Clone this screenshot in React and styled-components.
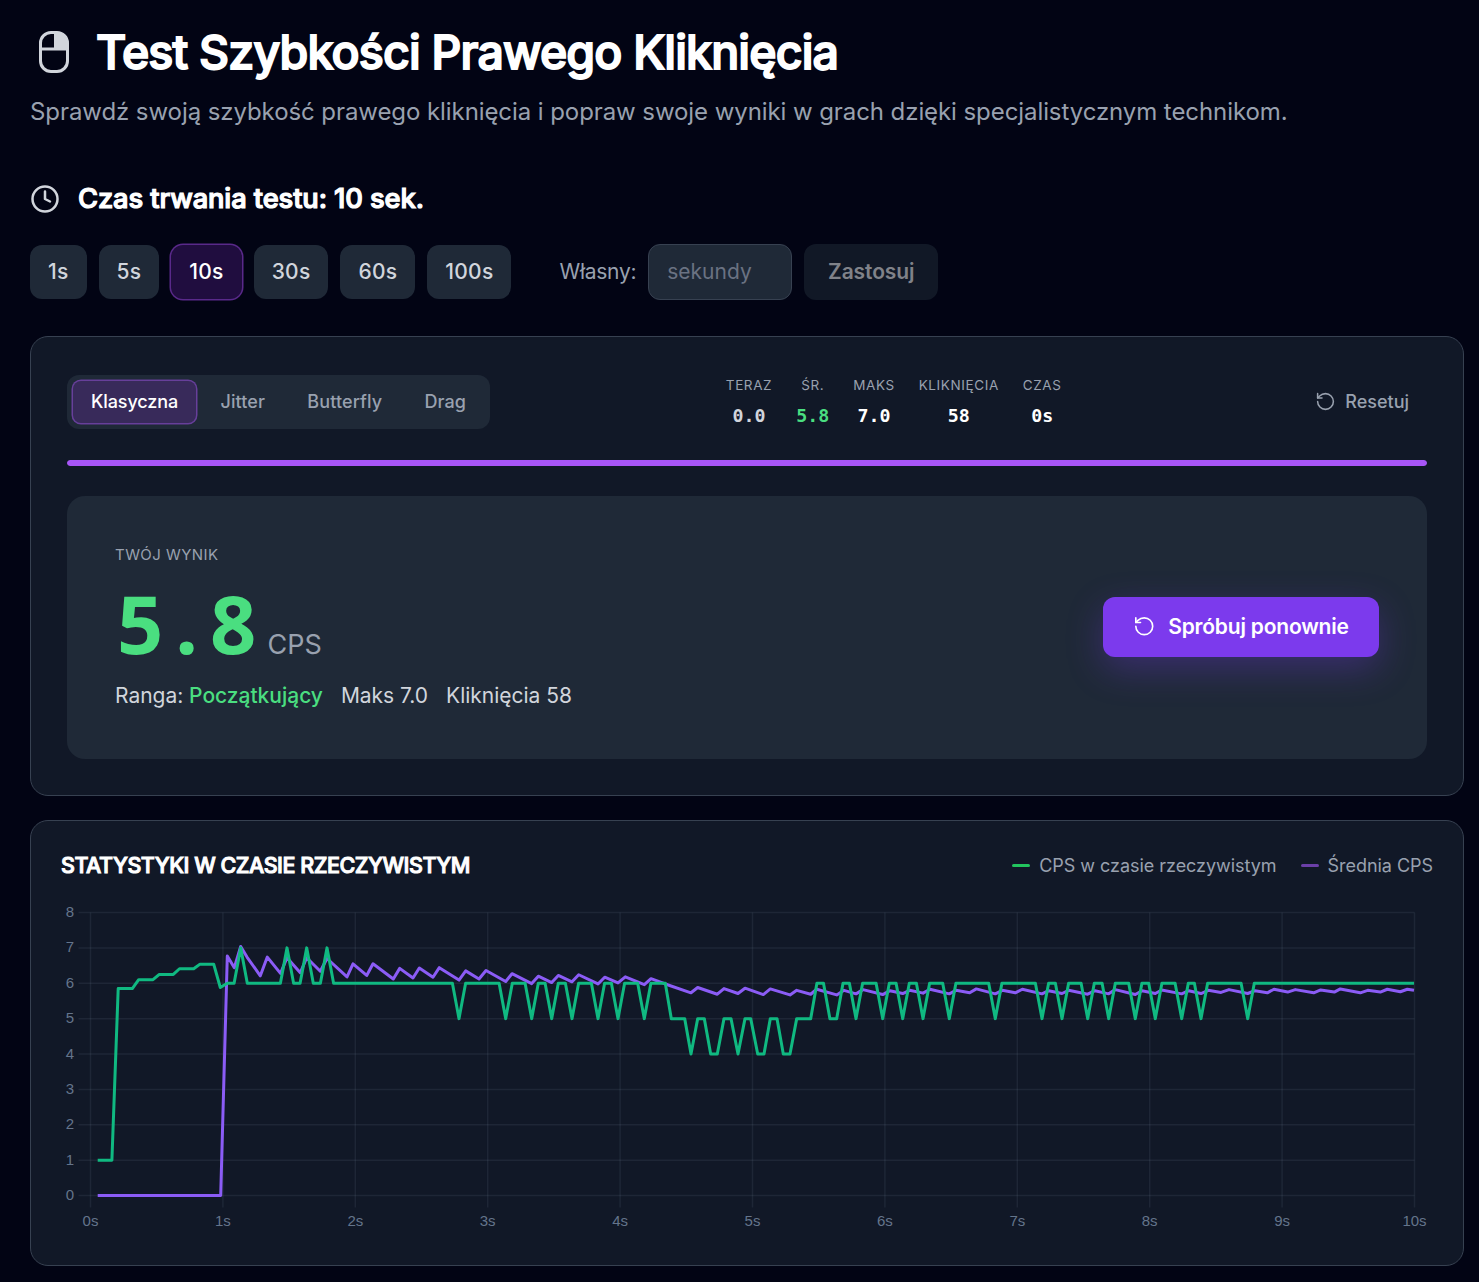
import React, { useState } from 'react';
import styled, { createGlobalStyle, css } from 'styled-components';
import { Clock, RotateCcw } from 'lucide-react';

const GlobalStyle = createGlobalStyle`
    *, *::before, *::after {
        box-sizing: border-box;
    }
    body {
        margin: 0;
        background-color: #020414;
        color: #ffffff;
        font-family: Inter, "Liberation Sans", sans-serif;
    }
    button, input {
        font-family: inherit;
        border: none;
        outline: none;
    }
    h1, h2, h3, p {
        margin: 0;
    }
`;

const Page = styled.main`
    min-height: 1282px;
    padding: 22px 15px 16px 30px;
    display: flex;
    flex-direction: column;
`;

const Header = styled.header`
    display: flex;
    align-items: center;
    gap: 18px;
    height: 60px;
`;

const MouseBox = styled.div`
    width: 48px;
    display: flex;
    justify-content: center;
`;

const Title = styled.h1`
    font-size: 46.5px;
    line-height: 60px;
    font-weight: 500;
    letter-spacing: -0.84px;
    -webkit-text-stroke: 1.8px #ffffff;
    white-space: nowrap;
`;

const Subtitle = styled.p`
    margin-top: 12px;
    font-size: 24px;
    line-height: 36px;
    letter-spacing: -0.08px;
    color: #99a1af;
    white-space: nowrap;
`;

const DurationTitle = styled.h2`
    margin-top: 48px;
    height: 42px;
    padding-bottom: 1px;
    display: flex;
    align-items: center;
    gap: 18px;
    font-size: 27.3px;
    font-weight: 500;
    letter-spacing: -0.1px;
    -webkit-text-stroke: 1.2px #ffffff;

    svg {
        color: #d1d5dc;
        margin-top: 1px;
    }
`;

const DurationRow = styled.div`
    margin-top: 24px;
    display: flex;
    align-items: center;
    height: 56px;
`;

const DurationList = styled.div`
    display: flex;
    gap: 12px;
`;

const activeRing = css`
    color: #ffffff;
    box-shadow: 0 0 0 1.5px ${({ $ring }) => $ring};
`;

const DurationButton = styled.button`
    height: 54px;
    padding: 0 18px 2px;
    border-radius: 12px;
    font-size: 21px;
    font-weight: 500;
    letter-spacing: 0.25px;
    color: #d1d5dc;
    background-color: ${({ $active }) => ($active ? '#200d3f' : '#1f2937')};
    ${({ $active }) => $active && activeRing}
`;

const CustomLabel = styled.label`
    margin: 0 12px 0 48px;
    padding-bottom: 2px;
    font-size: 21px;
    letter-spacing: -0.26px;
    color: #99a1af;
`;

const SecondsInput = styled.input`
    width: 144px;
    height: 56px;
    padding: 0 18px 2px;
    border: 1px solid #374151;
    border-radius: 12px;
    background-color: #1f2937;
    color: #ffffff;
    font-size: 21px;

    &::placeholder {
        color: #6a7282;
    }
`;

const ApplyButton = styled.button`
    margin-left: 12px;
    width: 134px;
    height: 56px;
    padding: 0 0 2px;
    border-radius: 12px;
    background-color: #111826;
    color: #808289;
    font-size: 21px;
    font-weight: 600;
    letter-spacing: -0.1px;
`;

const Card = styled.section`
    border: 1px solid #374151;
    border-radius: 18px;
    background-color: #111827;
`;

const TestCard = styled(Card)`
    margin-top: 36px;
    height: 460px;
    padding: 36px;
`;

const Toolbar = styled.div`
    height: 58px;
    display: flex;
    align-items: center;
    justify-content: space-between;
`;

const Tabs = styled.div`
    display: flex;
    gap: 6.3px;
    padding: 6px;
    border-radius: 12px;
    background-color: #1f2937;
`;

const Tab = styled.button`
    height: 42px;
    padding: 0 18px 2px;
    border-radius: 8px;
    font-size: 18px;
    font-weight: 500;
    letter-spacing: ${({ $active }) => ($active ? '-0.1px' : '0.1px')};
    color: #99a1af;
    background-color: ${({ $active }) => ($active ? '#382a5a' : 'transparent')};
    ${({ $active }) => $active && activeRing}
`;

const Stats = styled.div`
    display: flex;
    gap: 24px;
`;

const Stat = styled.div`
    display: flex;
    flex-direction: column;
    align-items: center;
`;

const StatLabel = styled.span`
    font-size: 13.5px;
    line-height: 24px;
    letter-spacing: 0.6px;
    text-transform: uppercase;
    color: #99a1af;
`;

const StatValue = styled.span`
    margin-top: 4px;
    font-family: "DejaVu Sans Mono", monospace;
    font-size: 18.3px;
    line-height: 30px;
    font-weight: 700;
    color: ${({ $color }) => $color || '#ffffff'};
`;

const ResetButton = styled.button`
    height: 42px;
    padding: 0 18px 2px;
    display: flex;
    align-items: center;
    gap: 9px;
    background: none;
    color: #99a1af;
    font-size: 18px;
    font-weight: 500;
`;

const Progress = styled.div`
    margin-top: 29px;
    height: 6px;
    border-radius: 3px;
    background-color: #1f2937;
    overflow: hidden;
`;

const ProgressFill = styled.div`
    height: 100%;
    border-radius: 3px;
    background-color: #a855f7;
`;

const ResultPanel = styled.div`
    margin-top: 30px;
    height: 263px;
    padding: 0 48px;
    display: flex;
    align-items: center;
    justify-content: space-between;
    border-radius: 18px;
    background-color: #1f2937;
`;

const ResultLabel = styled.p`
    font-size: 15px;
    line-height: 22px;
    letter-spacing: 0.45px;
    text-transform: uppercase;
    color: #99a1af;
`;

const ResultScore = styled.div`
    margin-top: 10px;
    padding-left: 2px;
    height: 94px;
    display: flex;
    align-items: baseline;
`;

const Digit = styled.span`
    width: 46.5px;
    text-align: center;
    font-family: "Noto Sans", sans-serif;
    font-size: 81px;
    line-height: 94px;
    font-weight: 700;
    color: #4ade80;
`;

const Unit = styled.span`
    margin-left: 11px;
    font-size: 27px;
    color: #99a1af;
`;

const ResultMeta = styled.p`
    margin-top: 10px;
    display: flex;
    gap: 18px;
    font-size: 21px;
    line-height: 32px;
    letter-spacing: -0.02px;
    color: #d1d5dc;
`;

const Rank = styled.span`
    color: #4ade80;
    font-weight: 500;
`;

const RetryButton = styled.button`
    width: 276px;
    height: 60px;
    margin-bottom: 1px;
    padding: 0 0 1px;
    display: flex;
    align-items: center;
    justify-content: center;
    gap: 12.5px;
    border-radius: 12px;
    background-color: #7c3aed;
    color: #ffffff;
    font-size: 21px;
    font-weight: 600;
    letter-spacing: -0.2px;
    box-shadow: 0 12px 36px rgba(124, 58, 237, 0.3);
`;

const ChartCard = styled(Card)`
    margin-top: 24px;
    height: 446px;
    padding: 30px;
`;

const ChartHeader = styled.div`
    height: 30px;
    padding-bottom: 2px;
    display: flex;
    align-items: center;
    justify-content: space-between;
`;

const ChartTitle = styled.h3`
    font-size: 21.5px;
    font-weight: 500;
    letter-spacing: -0.48px;
    -webkit-text-stroke: 1px #ffffff;
    text-transform: uppercase;
`;

const Legend = styled.div`
    display: flex;
    gap: 24px;
`;

const LegendItem = styled.div`
    display: flex;
    align-items: center;
    gap: 9px;
    font-size: 18px;
    letter-spacing: -0.04px;
    color: #99a1af;

    &::before {
        content: "";
        width: 18px;
        height: 3px;
        border-radius: 1.5px;
        background-color: ${({ $color }) => $color};
    }
`;

const ChartSvg = styled.svg`
    display: block;
    margin-top: 19px;
    overflow: visible;
`;

const AxisLabel = styled.text`
    font-family: "Liberation Sans", Arial, sans-serif;
    font-size: 15px;
    fill: #64748b;
`;

const durations = [1, 5, 10, 30, 60, 100];
const techniques = ['Klasyczna', 'Jitter', 'Butterfly', 'Drag'];
const stats = [
    { label: 'Teraz', value: '0.0', color: '#d1d5dc' },
    { label: 'Śr.', value: '5.8', color: '#4ade80' },
    { label: 'Maks', value: '7.0' },
    { label: 'Kliknięcia', value: '58' },
    { label: 'Czas', value: '0s' },
];

// chart space: x is in px, y is in clicks per second
const view = { x: 61, y: 900, width: 1372, height: 335 };
const plot = { left: 90.5, right: 1414.5, top: 912.5, bottom: 1195.5 };
const HALF = 6.6;

const toY = (cps) => plot.bottom - (cps * (plot.bottom - plot.top)) / 8;
const toX = (sec) => plot.left + (sec * (plot.right - plot.left)) / 10;
const toPoints = (data) => data.map(([x, v]) => `${x},${toY(v).toFixed(2)}`).join(' ');

// a single sample that leaves the 6 cps level
const spikes = (xs, value) => xs.flatMap((x) => [[x - HALF, 6], [x, value], [x + HALF, 6]]);

const realtime = [
    [97.7, 1], [111.9, 1], [118.2, 5.85], [132.3, 5.85], [138.7, 6.1], [153, 6.1],
    [159.3, 6.25], [173.3, 6.25], [179.5, 6.41], [193.7, 6.41], [200, 6.54], [213.7, 6.54],
    [220.3, 5.88], [227.3, 6],
    ...spikes([240.7, 287, 306.7, 327], 7),
    ...spikes([459, 505.7, 531.7, 551.7, 572, 598, 618, 644.3], 5),
    [665.3, 6], [671.3, 5], [684.7, 5], [691, 4], [697.7, 5], [704.3, 5], [710.7, 4],
    [717.3, 4], [724, 5], [731, 5], [738, 4], [745, 5], [750.7, 5], [757.7, 4], [764, 4],
    [770.3, 5], [777, 5], [783.3, 4], [790, 4], [796.7, 5], [810.7, 5], [816.9, 6],
    [823.5, 6], [829.9, 5], [836.7, 5], [843, 6],
    ...spikes([856, 882.7, 902.7, 923, 949.3, 995.3, 1042, 1062, 1087.7, 1108.7], 5),
    ...spikes([1135.3, 1155.3, 1181.7, 1201, 1247.7], 5),
    [1414, 6],
];

const average = [
    [97.7, 0], [220.7, 0], [227.3, 6.77], [234.3, 6.44], [240.7, 7.04], [247, 6.74],
    [260.3, 6.21], [267.3, 6.74], [280.5, 6.28], [287, 6.72], [300.3, 6.3], [306.7, 6.72],
    [320.3, 6.34], [327, 6.7], [347, 6.18], [353, 6.55], [366.7, 6.22], [373, 6.55],
    [393.3, 6.12], [399.7, 6.42], [413, 6.15], [419.3, 6.43], [433, 6.17], [439.3, 6.44],
    [459, 6.09], [465.7, 6.35], [479, 6.12], [486, 6.36], [505.7, 6.05], [512, 6.27],
    [531.7, 5.99], [538.3, 6.2], [551.7, 6.02], [558.3, 6.22], [572, 6.04], [578.7, 6.24],
    [598, 5.98], [604.7, 6.17], [618, 6.01], [625.3, 6.18], [644.3, 5.96], [651, 6.13],
    [665.3, 5.98], [691, 5.73], [697.7, 5.88], [717.3, 5.69], [724, 5.85], [738, 5.71],
    [745, 5.86], [763.3, 5.68], [770.3, 5.84], [790, 5.67], [796.7, 5.8], [810.7, 5.69],
    [816.7, 5.83], [836.7, 5.67], [844, 5.8], [856, 5.7], [863, 5.82], [882.7, 5.68],
    [890, 5.79], [902.7, 5.71], [909.7, 5.8], [923, 5.72], [930, 5.83], [949.3, 5.7],
    [956, 5.8], [969.7, 5.73], [976.3, 5.84], [995.3, 5.7], [1002.3, 5.8], [1015.3, 5.73],
    [1022.3, 5.83], [1042, 5.7], [1048.7, 5.79], [1062, 5.71], [1068.7, 5.8], [1087.7, 5.69],
    [1095, 5.79], [1108.7, 5.7], [1115.3, 5.82], [1135.3, 5.68], [1142, 5.79], [1155.3, 5.71],
    [1161.7, 5.81], [1181.7, 5.7], [1188.7, 5.79], [1201, 5.71], [1208.3, 5.8], [1221, 5.74],
    [1229, 5.82], [1247.7, 5.71], [1255, 5.79], [1267.3, 5.73], [1274, 5.83], [1287.7, 5.75],
    [1295.3, 5.82], [1313.7, 5.73], [1320.7, 5.81], [1334.3, 5.75], [1340.3, 5.84],
    [1360.3, 5.73], [1367.7, 5.8], [1380.3, 5.75], [1387.3, 5.83], [1400.3, 5.76],
    [1407.3, 5.83], [1414, 5.8],
];

const MouseRightIcon = () => (
    <svg width="30" height="42" viewBox="0 0 30 42" fill="none">
        <path d="M15 1.5h3a10.5 10.5 0 0 1 10.5 10.5v6.5H15z" fill="#d1d5dc" />
        <rect x="1.5" y="1.5" width="27" height="39" rx="10.5" stroke="#d1d5dc" strokeWidth="3" />
        <path d="M2 18h26" stroke="#d1d5dc" strokeWidth="3" />
    </svg>
);

const CpsChart = () => {
    const rows = [0, 1, 2, 3, 4, 5, 6, 7, 8];
    const columns = [0, 1, 2, 3, 4, 5, 6, 7, 8, 9, 10];

    return (
        <ChartSvg
            width={view.width}
            height={view.height}
            viewBox={`${view.x} ${view.y} ${view.width} ${view.height}`}
        >
            <g stroke="#94a3b8" strokeOpacity="0.1" strokeWidth="1.5">
                {rows.map((v) => (
                    <line key={v} x1={plot.left - 12} x2={plot.right} y1={toY(v)} y2={toY(v)} />
                ))}
                {columns.map((s) => (
                    <line key={s} x1={toX(s)} x2={toX(s)} y1={plot.top} y2={plot.bottom + 12} />
                ))}
            </g>
            {rows.map((v) => (
                <AxisLabel key={v} x="74" y={toY(v) + 4.5} textAnchor="end">{v}</AxisLabel>
            ))}
            {columns.map((s) => (
                <AxisLabel key={s} x={toX(s)} y="1226" textAnchor="middle">{`${s}s`}</AxisLabel>
            ))}
            <g fill="none" strokeWidth="3" strokeLinejoin="round">
                <polyline points={toPoints(average)} stroke="#8b5cf6" />
                <polyline points={toPoints(realtime)} stroke="#10b981" />
            </g>
        </ChartSvg>
    );
};

const App = () => {
    const [duration, setDuration] = useState(10);
    const [technique, setTechnique] = useState('Klasyczna');

    return (
        <Page>
            <GlobalStyle />
            <Header>
                <MouseBox>
                    <MouseRightIcon />
                </MouseBox>
                <Title>Test Szybkości Prawego Kliknięcia</Title>
            </Header>
            <Subtitle>
                Sprawdź swoją szybkość prawego kliknięcia i popraw swoje wyniki w grach dzięki specjalistycznym technikom.
            </Subtitle>

            <DurationTitle>
                <Clock size={30} strokeWidth={2} />
                Czas trwania testu: {duration} sek.
            </DurationTitle>
            <DurationRow>
                <DurationList>
                    {durations.map((d) => (
                        <DurationButton
                            key={d}
                            $active={d === duration}
                            $ring="#59298a"
                            onClick={() => setDuration(d)}
                        >
                            {d}s
                        </DurationButton>
                    ))}
                </DurationList>
                <CustomLabel htmlFor="seconds">Własny:</CustomLabel>
                <SecondsInput id="seconds" placeholder="sekundy" />
                <ApplyButton>Zastosuj</ApplyButton>
            </DurationRow>

            <TestCard>
                <Toolbar>
                    <Tabs>
                        {techniques.map((name) => (
                            <Tab
                                key={name}
                                $active={name === technique}
                                $ring="#673f9a"
                                onClick={() => setTechnique(name)}
                            >
                                {name}
                            </Tab>
                        ))}
                    </Tabs>
                    <Stats>
                        {stats.map(({ label, value, color }) => (
                            <Stat key={label}>
                                <StatLabel>{label}</StatLabel>
                                <StatValue $color={color}>{value}</StatValue>
                            </Stat>
                        ))}
                    </Stats>
                    <ResetButton>
                        <RotateCcw size={21} strokeWidth={1.75} />
                        Resetuj
                    </ResetButton>
                </Toolbar>
                <Progress>
                    <ProgressFill style={{ width: '100%' }} />
                </Progress>
                <ResultPanel>
                    <div>
                        <ResultLabel>Twój wynik</ResultLabel>
                        <ResultScore>
                            {[...'5.8'].map((char) => (
                                <Digit key={char}>{char}</Digit>
                            ))}
                            <Unit>CPS</Unit>
                        </ResultScore>
                        <ResultMeta>
                            <span>Ranga: <Rank>Początkujący</Rank></span>
                            <span>Maks 7.0</span>
                            <span>Kliknięcia 58</span>
                        </ResultMeta>
                    </div>
                    <RetryButton>
                        <RotateCcw size={22.5} strokeWidth={1.75} />
                        Spróbuj ponownie
                    </RetryButton>
                </ResultPanel>
            </TestCard>

            <ChartCard>
                <ChartHeader>
                    <ChartTitle>Statystyki w czasie rzeczywistym</ChartTitle>
                    <Legend>
                        <LegendItem $color="#22c55e">CPS w czasie rzeczywistym</LegendItem>
                        <LegendItem $color="#6b3fa8">Średnia CPS</LegendItem>
                    </Legend>
                </ChartHeader>
                <CpsChart />
            </ChartCard>
        </Page>
    );
};

export default App;
